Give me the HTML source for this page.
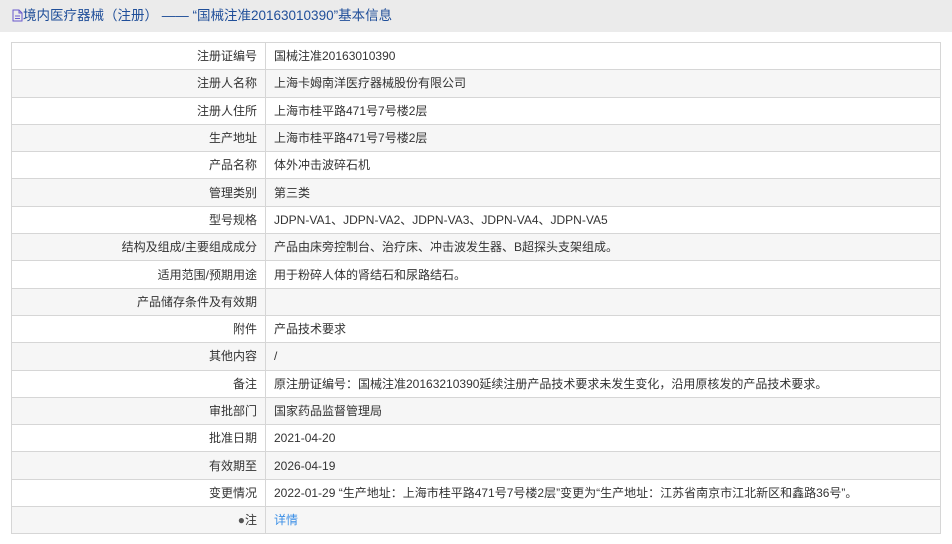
<!DOCTYPE html>
<html><head><meta charset="utf-8"><style>
body{margin:0;width:952px;height:544px;background:#fff;font-family:"Liberation Sans","Noto Sans CJK SC",sans-serif;font-size:12px;color:#333;overflow:hidden}
.hd{height:32px;background:#ebebeb;line-height:32px;padding-left:12px;font-size:13.5px;color:#1f4e99}
.hd svg{vertical-align:-2px}
table{position:absolute;left:11px;top:42px;width:930px;border-collapse:collapse}
td{border:1px solid #d6d6d6;height:26.3px;padding:0;line-height:26px}
td.l{width:245px;text-align:right;padding-right:8px}
td.v{padding-left:8px}
tr:nth-child(even){background:#f6f6f6}
a{color:#3a8ee6;text-decoration:none}
</style></head><body>
<div class="hd"><svg width="11" height="13" viewBox="0 0 11 13"><path d="M1 1h6l3 3v8H1z M7 1v3h3 M3 7h5 M3 9.5h5" fill="none" stroke="#6a5acd" stroke-width="1"/></svg>境内医疗器械（注册） —— “国械注准20163010390”基本信息</div>
<table>
<tr><td class="l">注册证编号</td><td class="v">国械注准20163010390</td></tr>
<tr><td class="l">注册人名称</td><td class="v">上海卡姆南洋医疗器械股份有限公司</td></tr>
<tr><td class="l">注册人住所</td><td class="v">上海市桂平路471号7号楼2层</td></tr>
<tr><td class="l">生产地址</td><td class="v">上海市桂平路471号7号楼2层</td></tr>
<tr><td class="l">产品名称</td><td class="v">体外冲击波碎石机</td></tr>
<tr><td class="l">管理类别</td><td class="v">第三类</td></tr>
<tr><td class="l">型号规格</td><td class="v">JDPN-VA1、JDPN-VA2、JDPN-VA3、JDPN-VA4、JDPN-VA5</td></tr>
<tr><td class="l">结构及组成/主要组成成分</td><td class="v">产品由床旁控制台、治疗床、冲击波发生器、B超探头支架组成。</td></tr>
<tr><td class="l">适用范围/预期用途</td><td class="v">用于粉碎人体的肾结石和尿路结石。</td></tr>
<tr><td class="l">产品储存条件及有效期</td><td class="v"></td></tr>
<tr><td class="l">附件</td><td class="v">产品技术要求</td></tr>
<tr><td class="l">其他内容</td><td class="v">/</td></tr>
<tr><td class="l">备注</td><td class="v">原注册证编号：国械注准20163210390延续注册产品技术要求未发生变化，沿用原核发的产品技术要求。</td></tr>
<tr><td class="l">审批部门</td><td class="v">国家药品监督管理局</td></tr>
<tr><td class="l">批准日期</td><td class="v">2021-04-20</td></tr>
<tr><td class="l">有效期至</td><td class="v">2026-04-19</td></tr>
<tr><td class="l">变更情况</td><td class="v">2022-01-29 “生产地址：上海市桂平路471号7号楼2层”变更为“生产地址：江苏省南京市江北新区和鑫路36号”。</td></tr>
<tr><td class="l"><span style="color:#555">●</span>注</td><td class="v"><a>详情</a></td></tr>
</table>
</body></html>
